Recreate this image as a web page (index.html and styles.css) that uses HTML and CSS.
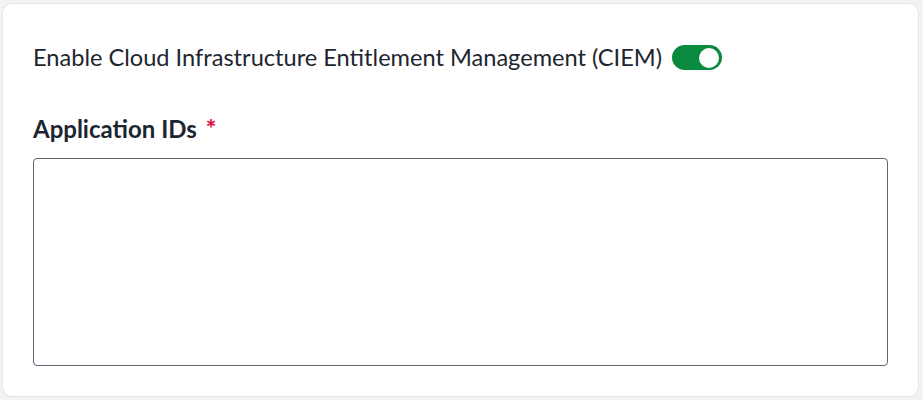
FILE: index.html
```
<!DOCTYPE html>
<html lang="en">
<head>
<meta charset="utf-8">
<link rel="stylesheet" href="styles.css">
</head>
<body>
<div class="card">
  <div class="toggle-row">
    <span class="toggle-label">Enable Cloud Infrastructure Entitlement Management (CIEM)</span>
    <span class="switch" role="switch" aria-checked="true"><span class="knob"></span></span>
  </div>
  <label class="field-label" for="appids">Application IDs <span class="req">*</span></label>
  <textarea id="appids" class="textarea"></textarea>
</div>
</body>
</html>
```
FILE: styles.css
```
html, body {
  margin: 0;
  padding: 0;
  background: #f1f3f5;
}
body {
  padding: 4px 5px 4px 3px;
  font-family: Lato, "Open Sans", sans-serif;
  color: #1d2630;
}
.card {
  background: #ffffff;
  border-radius: 9px;
  box-shadow: 0 0 0 1px #e3e7eb, 0 1px 2px rgba(0,0,0,0.06);
  height: 392px;
  box-sizing: border-box;
  padding: 37px 30px 0 30px;
  display: flex;
  flex-direction: column;
}
.toggle-row {
  display: flex;
  align-items: center;
  gap: 10px;
  height: 32px;
}
.toggle-label {
  font-size: 23.6px;
  line-height: 32px;
  white-space: nowrap;
}
.switch {
  width: 50px;
  height: 25px;
  border-radius: 13px;
  background: #0a8a3f;
  display: flex;
  align-items: center;
  justify-content: flex-end;
  padding: 0 3px;
  box-sizing: border-box;
  margin-top: 1px;
}
.knob {
  width: 20px;
  height: 20px;
  border-radius: 50%;
  background: #ffffff;
}
.field-label {
  margin-top: 39px;
  font-size: 24px;
  line-height: 32px;
  font-weight: 700;
  color: #1d2630;
}
.req {
  color: #e0184a;
  font-size: 25px;
  font-weight: 900;
  margin-left: 3px;
}
.textarea {
  margin-top: 13px;
  width: 100%;
  height: 208px;
  box-sizing: border-box;
  border: 1px solid #5b6874;
  border-radius: 4px;
  resize: none;
  background: #fff;
  font-family: inherit;
  padding: 8px;
}
```
